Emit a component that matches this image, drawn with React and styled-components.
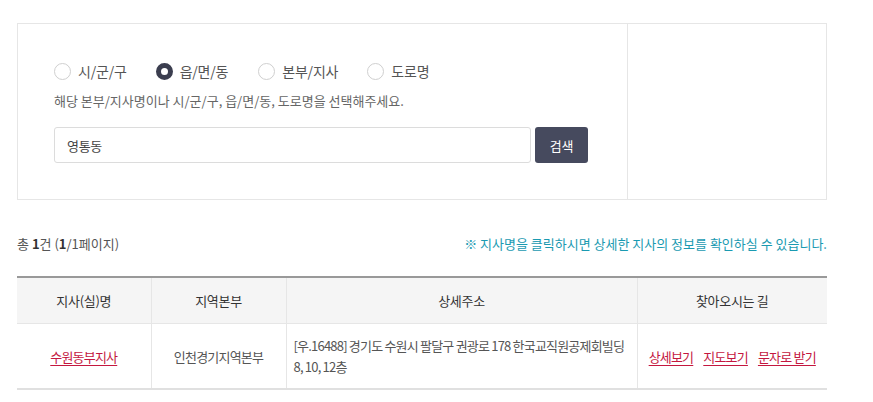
import React from 'react';
import styled, { createGlobalStyle } from 'styled-components';

const GlobalStyle = createGlobalStyle`
  body {
    margin: 0;
    background: #fff;
    font-family: "Noto Sans CJK KR", "Noto Sans", sans-serif;
    color: #555;
  }
`

const Page = styled.div`
  width: 810px;
  padding: 23px 0 0 17px;
`

const SearchBox = styled.div`
  display: grid;
  grid-template-columns: 610px 1fr;
  height: 177px;
  border: 1px solid #e6e6e6;
  box-sizing: border-box;
`

const SearchForm = styled.div`
  display: flex;
  flex-direction: column;
  padding: 37px 0 0 36px;
  border-right: 1px solid #e6e6e6;
`

const Radios = styled.div`
  display: flex;
  align-items: center;
  height: 20px;
`

const Radio = styled.label`
  display: flex;
  align-items: center;
  gap: 7px;
  margin-right: ${p => p.$gap}px;
  font-size: 14px;
  letter-spacing: -0.2px;
  color: #555;
`

const Dot = styled.span`
  width: 17px;
  height: 17px;
  border-radius: 50%;
  box-sizing: border-box;
  border: ${p => (p.$on ? '5px solid #3b3e4f' : '1px solid #cfcfcf')};
  background: #fff;
`

const Help = styled.p`
  margin: 9px 0 0;
  font-size: 13px;
  letter-spacing: 0;
  color: #666;
  line-height: 22px;
`

const InputRow = styled.div`
  display: flex;
  gap: 4px;
  margin-top: 15px;
`

const Input = styled.div`
  width: 477px;
  height: 36px;
  box-sizing: border-box;
  border: 1px solid #dcdcdc;
  border-radius: 3px;
  padding: 0 12px;
  display: flex;
  align-items: center;
  font-size: 13px;
  letter-spacing: -0.3px;
  color: #444;
`

const Button = styled.button`
  width: 53px;
  height: 36px;
  border: 0;
  border-radius: 3px;
  background: #464a5e;
  color: #fff;
  font-family: inherit;
  font-size: 13px;
  letter-spacing: -0.3px;
`

const ResultBar = styled.div`
  display: flex;
  justify-content: space-between;
  align-items: center;
  margin-top: 32px;
  height: 22px;
  font-size: 13px;
  letter-spacing: 0;
`

const Count = styled.span`
  color: #555;
  b { color: #333; font-weight: 700; }
`

const Note = styled.span`
  color: #1a9ab1;
`

const Table = styled.table`
  width: 100%;
  margin-top: 22px;
  border-collapse: collapse;
  border-top: 2px solid #999;
  border-bottom: 2px solid #e0e0e0;
  font-size: 13px;
  letter-spacing: -0.8px;
`

const Th = styled.th`
  height: 43px;
  background: #f5f5f5;
  font-weight: 400;
  color: #333;
  letter-spacing: -0.3px;
  border-left: 1px solid #e6e6e6;
  border-bottom: 1px solid #e6e6e6;
  &:first-child { border-left: 0; }
`

const Td = styled.td`
  height: 64px;
  text-align: ${p => p.$align || 'center'};
  padding: ${p => (p.$align === 'left' ? '0 8px 0 7px' : '0')};
  color: #555;
  line-height: 21px;
  border-left: 1px solid #e6e6e6;
  &:first-child { border-left: 0; }
`

const Link = styled.a`
  color: #c4173f;
  text-decoration: underline;
  text-underline-offset: 3px;
  margin: 0 5px;
`

const App = () => (
  <Page>
    <GlobalStyle />
    <SearchBox>
      <SearchForm>
        <Radios>
          <Radio $gap={29}><Dot />시/군/구</Radio>
          <Radio $gap={30}><Dot $on />읍/면/동</Radio>
          <Radio $gap={29}><Dot />본부/지사</Radio>
          <Radio $gap={0}><Dot />도로명</Radio>
        </Radios>
        <Help>해당 본부/지사명이나 시/군/구, 읍/면/동, 도로명을 선택해주세요.</Help>
        <InputRow>
          <Input>영통동</Input>
          <Button>검색</Button>
        </InputRow>
      </SearchForm>
      <div />
    </SearchBox>

    <ResultBar>
      <Count>총 <b>1</b>건 (<b>1</b>/1페이지)</Count>
      <Note>※ 지사명을 클릭하시면 상세한 지사의 정보를 확인하실 수 있습니다.</Note>
    </ResultBar>

    <Table>
      <colgroup>
        <col style={{ width: 134 }} />
        <col style={{ width: 135 }} />
        <col style={{ width: 351 }} />
        <col />
      </colgroup>
      <thead>
        <tr>
          <Th>지사(실)명</Th>
          <Th>지역본부</Th>
          <Th>상세주소</Th>
          <Th>찾아오시는 길</Th>
        </tr>
      </thead>
      <tbody>
        <tr>
          <Td><Link>수원동부지사</Link></Td>
          <Td>인천경기지역본부</Td>
          <Td $align="left">[우.16488] 경기도 수원시 팔달구 권광로 178 한국교직원공제회빌딩 8, 10, 12층</Td>
          <Td><Link>상세보기</Link><Link>지도보기</Link><Link>문자로 받기</Link></Td>
        </tr>
      </tbody>
    </Table>
  </Page>
);

export default App;
